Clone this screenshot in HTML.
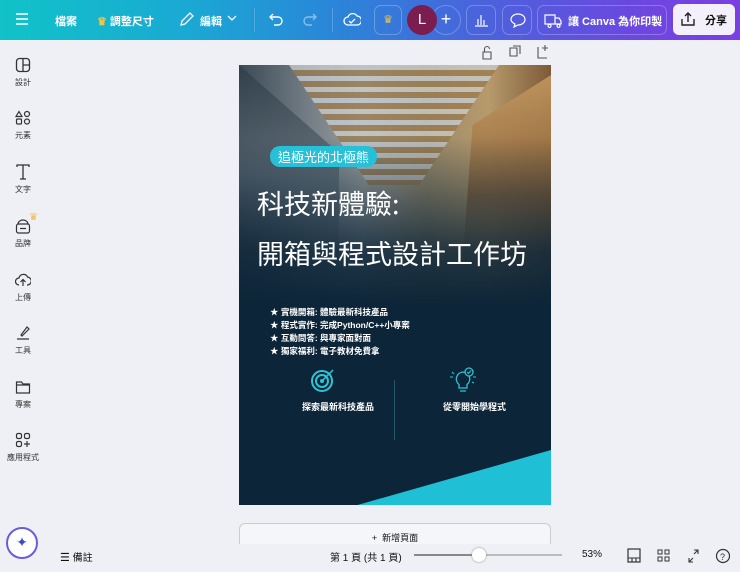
<!DOCTYPE html>
<html><head><meta charset="utf-8"><style>
*{margin:0;padding:0;box-sizing:border-box}
body{width:740px;height:572px;overflow:hidden;background:#eef0f5;font-family:"Liberation Sans","Noto Sans CJK TC",sans-serif;position:relative;color:#111}
.top{position:absolute;left:0;top:0;width:740px;height:40px;background:linear-gradient(90deg,#10c3c8 0%,#1aa9d4 25%,#2a86d8 45%,#4a63dc 65%,#6a48e0 85%,#7b3fe2 100%)}
.t{position:absolute;color:#fff;font-size:11px;font-weight:bold;top:13px}
.btn{position:absolute;top:5px;height:30px;border:1px solid rgba(255,255,255,.25);border-radius:7px}
.side{position:absolute;left:0;top:40px;width:46px}
.si{position:absolute;left:0;width:46px;text-align:center;font-size:8px;color:#333}
.si svg{display:block;margin:0 auto 4px}
.canvas{position:absolute;left:239px;top:65px;width:312px;height:440px;background:#0c2538;overflow:hidden}
.photo{position:absolute;left:0;top:0;width:312px;height:240px;background:linear-gradient(90deg,#3b4a55 0%,#6e7880 20%,#9fa3a2 40%,#9a8a6a 60%,#b79a6c 80%,#7c5a38 100%);}
.roof{position:absolute;left:50px;top:0;width:210px;height:120px;background:repeating-linear-gradient(180deg,#c9ced2 0 5px,#9a7a4c 5px 11px);clip-path:polygon(0 0,100% 0,62% 100%,38% 100%);opacity:.75}
.tag{position:absolute;left:31px;top:81px;background:#27c0d6;color:#fff;font-size:13px;padding:1px 8px;border-radius:10px}
.h{position:absolute;left:18px;color:#fff;font-size:27px;font-family:"Noto Sans CJK TC",sans-serif}
.list{position:absolute;left:31px;top:241px;color:#fff;font-size:8.5px;line-height:13px;font-weight:bold}
</style></head><body>
<div class="top">
<svg style="position:absolute;left:15px;top:13px" width="14" height="12"><path d="M1 1h12M1 6h12M1 11h12" stroke="#fff" stroke-width="1.5"/></svg>
<div class="t" style="left:55px">檔案</div>
<div class="t" style="left:97px"><span style="color:#f5c542">♛</span> 調整尺寸</div>
<svg style="position:absolute;left:179px;top:12px" width="15" height="15"><path d="M2 13l1-4 8-8 3 3-8 8z" stroke="#fff" fill="none" stroke-width="1.3"/></svg>
<div class="t" style="left:200px">編輯</div>
<svg style="position:absolute;left:227px;top:15px" width="10" height="7"><path d="M1 1l4 4 4-4" stroke="#fff" fill="none" stroke-width="1.3"/></svg>
<div style="position:absolute;left:254px;top:8px;width:1px;height:24px;background:rgba(255,255,255,.2)"></div>
<svg style="position:absolute;left:268px;top:12px" width="16" height="14"><path d="M5 2L2 5l3 3M2 5h8a4 4 0 010 8H6" stroke="#fff" fill="none" stroke-width="1.4"/></svg>
<svg style="position:absolute;left:302px;top:12px" width="16" height="14"><path d="M11 2l3 3-3 3M14 5H6a4 4 0 000 8h4" stroke="rgba(255,255,255,.45)" fill="none" stroke-width="1.4"/></svg>
<div style="position:absolute;left:332px;top:8px;width:1px;height:24px;background:rgba(255,255,255,.2)"></div>
<svg style="position:absolute;left:343px;top:11px" width="18" height="16"><path d="M5 14a4 4 0 010-8 5 5 0 019-1 4 4 0 010 9z M6 10l2 2 4-4" stroke="#fff" fill="none" stroke-width="1.3"/></svg>
<div class="btn" style="left:374px;width:28px;text-align:center;color:#f5c542;font-size:11px;line-height:28px">♛</div>
<div class="btn" style="left:431px;width:30px;border-radius:15px;color:#fff;text-align:center;font-size:18px;line-height:27px">+</div>
<div style="position:absolute;left:407px;top:5px;width:30px;height:30px;border-radius:15px;background:#7b1d4f;color:#fff;font-size:15px;text-align:center;line-height:30px">L</div>
<div class="btn" style="left:466px;width:30px"><svg style="margin:7px" width="15" height="14"><path d="M1 13h13M4 12V6M7 12V2M10 12V7" stroke="#fff" stroke-width="1.2"/></svg></div>
<div class="btn" style="left:502px;width:30px"><svg style="margin:6px 7px" width="16" height="16"><path d="M8 2c4 0 7 2.5 7 5.5S12 13 8 13l-4 2 1-3C3 11 1 9.5 1 7.5 1 4.5 4 2 8 2z" stroke="#fff" fill="none" stroke-width="1.2"/></svg></div>
<div class="btn" style="left:537px;width:130px"><svg style="position:absolute;left:6px;top:7px" width="18" height="15"><path d="M1 2h10v9H1zM11 5h4l2 3v3h-6M4 13a1.5 1.5 0 100-.1M13 13a1.5 1.5 0 100-.1" stroke="#fff" fill="none" stroke-width="1.2"/></svg><span style="position:absolute;left:30px;top:7px;color:#fff;font-size:11px;font-weight:bold;white-space:nowrap">讓 Canva 為你印製</span></div>
<div style="position:absolute;left:673px;top:4px;width:62px;height:31px;background:#f4f0fb;border-radius:6px"><svg style="position:absolute;left:7px;top:7px" width="16" height="16"><path d="M8 11V2M5 5l3-3 3 3M2 8v6h12V8" stroke="#222" fill="none" stroke-width="1.4"/></svg><span style="position:absolute;left:32px;top:8px;font-size:11px;font-weight:bold">分享</span></div>
</div>

<div class="side">
<div class="si" style="top:17px"><svg width="16" height="16"><rect x="1.5" y="1.5" width="13" height="13" rx="3" stroke="#333" fill="none" stroke-width="1.3"/><path d="M8 2v12M8 8h6" stroke="#333" stroke-width="1.3"/></svg>設計</div>
<div class="si" style="top:70px"><svg width="16" height="16"><rect x="1.5" y="9" width="5" height="5" rx="1" stroke="#333" fill="none" stroke-width="1.2"/><circle cx="12" cy="11.5" r="2.5" stroke="#333" fill="none" stroke-width="1.2"/><circle cx="12" cy="4" r="2.5" stroke="#333" fill="none" stroke-width="1.2"/><path d="M4 1.5l3 5H1z" stroke="#333" fill="none" stroke-width="1.2"/></svg>元素</div>
<div class="si" style="top:124px"><svg width="16" height="16"><path d="M2 3V1h12v2M8 1v14M5 15h6" stroke="#333" fill="none" stroke-width="1.3"/></svg>文字</div>
<div class="si" style="top:178px"><svg width="16" height="16"><rect x="1.5" y="6" width="13" height="9" rx="2" stroke="#333" fill="none" stroke-width="1.2"/><path d="M3 6a5 4 0 0110 0M5 10.5h6" stroke="#333" fill="none" stroke-width="1.2"/></svg>品牌<span style="position:absolute;left:29px;top:-6px;color:#f5b942;font-size:10px">♛</span></div>
<div class="si" style="top:232px"><svg width="16" height="16"><path d="M4 13a3.5 3.5 0 010-7 4.5 4.5 0 018.5-1 3.5 3.5 0 01-.5 8M8 14V8M5.5 10L8 7.5 10.5 10" stroke="#333" fill="none" stroke-width="1.2"/></svg>上傳</div>
<div class="si" style="top:285px"><svg width="16" height="16"><path d="M6 10l6-8 2 2-7 7zM2 14h12" stroke="#333" fill="none" stroke-width="1.2"/></svg>工具</div>
<div class="si" style="top:339px"><svg width="16" height="16"><path d="M1.5 3h5l1.5 2h6.5v9h-13z M1.5 6h13" stroke="#333" fill="none" stroke-width="1.2"/></svg>專案</div>
<div class="si" style="top:392px"><svg width="16" height="16"><rect x="1.5" y="1.5" width="5" height="5" rx="1.5" stroke="#333" fill="none" stroke-width="1.2"/><rect x="9.5" y="1.5" width="5" height="5" rx="1.5" stroke="#333" fill="none" stroke-width="1.2"/><rect x="1.5" y="9.5" width="5" height="5" rx="1.5" stroke="#333" fill="none" stroke-width="1.2"/><path d="M12 9v6M9 12h6" stroke="#333" stroke-width="1.2"/></svg>應用程式</div>
</div>

<svg style="position:absolute;left:480px;top:44px" width="70" height="16"><path d="M3 8h8v7H3zM4.5 8V5a2.5 2.5 0 015 0" stroke="#555" fill="none" stroke-width="1.1"/><path d="M30 4h7v8h-7zM33 2h7v8" stroke="#555" fill="none" stroke-width="1.1"/><path d="M58 3v11h9M62 4h6M65 1v6" stroke="#555" fill="none" stroke-width="1.1"/></svg>

<div class="canvas">
<div class="photo"><div class="roof"></div>
<div style="position:absolute;left:200px;top:10px;width:112px;height:200px;background:linear-gradient(180deg,#c79a60,#8a6238 60%,rgba(138,98,56,0));opacity:.85;clip-path:polygon(30% 25%,100% 0,100% 100%,20% 100%)"></div>
<div style="position:absolute;left:0;top:0;width:100px;height:220px;background:linear-gradient(180deg,#2f3d48,#5d6b75 50%,rgba(93,107,117,0));opacity:.8;clip-path:polygon(0 0,100% 40%,100% 100%,0 100%)"></div>
<div style="position:absolute;left:0;top:0;width:312px;height:240px;background:linear-gradient(180deg,rgba(12,37,56,0) 30%,rgba(12,37,56,.45) 55%,rgba(12,37,56,.85) 78%,#0c2538 100%)"></div>
</div>
<div class="tag">追極光的北極熊</div>
<div class="h" style="top:118px">科技新體驗:</div>
<div class="h" style="top:168px">開箱與程式設計工作坊</div>
<div class="list">★ 實機開箱: 體驗最新科技產品<br>★ 程式實作: 完成Python/C++小專案<br>★ 互動問答: 與專家面對面<br>★ 獨家福利: 電子教材免費拿</div>
<svg style="position:absolute;left:71px;top:302px" width="26" height="26"><circle cx="12" cy="14" r="10" stroke="#2ec4d6" fill="none" stroke-width="2"/><circle cx="12" cy="14" r="6" stroke="#2ec4d6" fill="none" stroke-width="2"/><circle cx="12" cy="14" r="2" fill="#2ec4d6"/><path d="M13 13l10-10" stroke="#2ec4d6" stroke-width="1.5"/></svg>
<div style="position:absolute;left:63px;top:335px;color:#fff;font-size:9px;font-weight:bold">探索最新科技產品</div>
<div style="position:absolute;left:155px;top:315px;width:1px;height:60px;background:#24566a"></div>
<svg style="position:absolute;left:208px;top:302px" width="32" height="28"><path d="M16 5a7 7 0 00-4 12.5V21h8v-3.5A7 7 0 0016 5zM13 24h6" stroke="#2ec4d6" fill="none" stroke-width="1.3"/><circle cx="22" cy="5" r="4" stroke="#2ec4d6" fill="#0c2538" stroke-width="1.3"/><path d="M20 5l1.5 1.5 2.5-3M3 10h3M26 10h3M5 5l2 2M27 16l-2-1" stroke="#2ec4d6" fill="none" stroke-width="1.1"/></svg>
<div style="position:absolute;left:204px;top:335px;color:#fff;font-size:9px;font-weight:bold">從零開始學程式</div>
<div style="position:absolute;left:0;top:385px;width:312px;height:55px;background:#1fc0d6;clip-path:polygon(100% 0,100% 100%,38% 100%)"></div>
</div>

<div style="position:absolute;left:239px;top:523px;width:312px;height:30px;border:1px solid #ccc;border-bottom:none;border-radius:6px 6px 0 0;background:#f5f6f9;text-align:center;font-size:9px;padding-top:7px">+&nbsp; 新增頁面</div>
<div style="position:absolute;left:0;top:544px;width:740px;height:28px;background:#eef0f5"></div>
<div style="position:absolute;left:6px;top:527px;width:32px;height:32px;border-radius:16px;background:#fff;border:2px solid #6a5be0;text-align:center;line-height:27px;color:#3a4ad0;font-size:14px">✦</div>
<div style="position:absolute;left:60px;top:549px;font-size:10px"><span style="font-size:11px">☰</span> 備註</div>
<div style="position:absolute;left:330px;top:549px;font-size:10px">第 1 頁 (共 1 頁)</div>
<div style="position:absolute;left:414px;top:554px;width:148px;height:2px;background:#bbb"></div>
<div style="position:absolute;left:414px;top:554px;width:66px;height:2px;background:#888"></div>
<div style="position:absolute;left:472px;top:548px;width:14px;height:14px;border-radius:7px;background:#fff;box-shadow:0 0 2px #888"></div>
<div style="position:absolute;left:582px;top:549px;font-size:10px">53%</div>
<svg style="position:absolute;left:626px;top:548px" width="110" height="16"><rect x="2" y="1" width="12" height="13" stroke="#333" fill="none" stroke-width="1.2"/><path d="M2 10h12M6 10v4M10 10v4" stroke="#333" stroke-width="1.1"/><rect x="32" y="2" width="4" height="4" stroke="#333" fill="none"/><rect x="39" y="2" width="4" height="4" stroke="#333" fill="none"/><rect x="32" y="9" width="4" height="4" stroke="#333" fill="none"/><rect x="39" y="9" width="4" height="4" stroke="#333" fill="none"/><path d="M63 14l4-4M63 10v4h4M72 2l-4 4M72 6V2h-4" stroke="#333" fill="none" stroke-width="1.1"/><circle cx="97" cy="8" r="6.5" stroke="#333" fill="none" stroke-width="1.2"/><text x="94" y="12" font-size="9" fill="#333" font-family="Liberation Sans">?</text></svg>
</body></html>
